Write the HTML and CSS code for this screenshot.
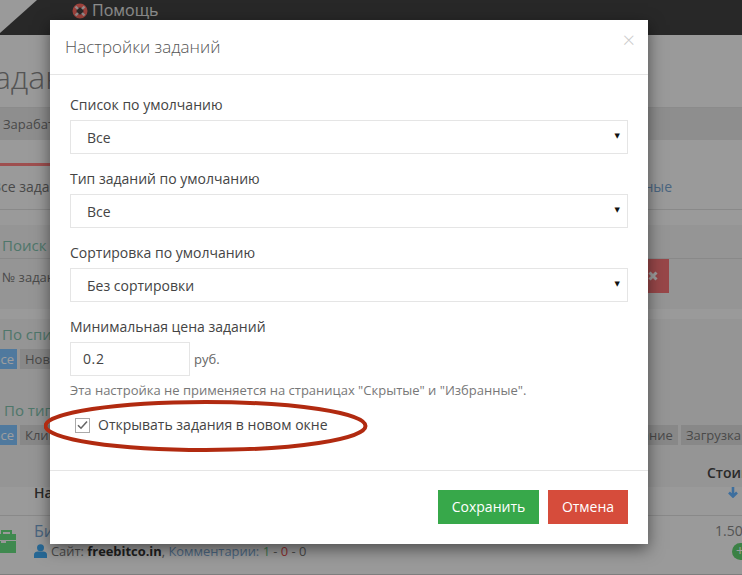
FILE: index.html
```html
<!DOCTYPE html>
<html lang="ru">
<head>
<meta charset="utf-8">
<title>Настройки заданий</title>
<link rel="stylesheet" href="styles.css">
</head>
<body>
<div class="page">
  <header class="topbar">
    <svg class="corner" width="37" height="33" viewBox="0 0 37 33"><path d="M0 0H37L0 33Z" fill="#f9f9f9"/></svg>
    <svg class="help-icon" width="16" height="16" viewBox="0 0 16 16"><circle cx="8" cy="8" r="5.500" fill="none" stroke="#ff6a60" stroke-width="4"/><path d="M3.500 3.500L6 6M12.500 3.500L10 6M3.500 12.500L6 10M12.500 12.500L10 10" stroke="#f0e0e0" stroke-width="2.400"/></svg>
    <span class="help-text">Помощь</span>
  </header>
  <h1 class="page-title">Задания</h1>
  <div class="crumbs">Зарабатывать</div>
  <div class="tabs"><span class="tab-active">Все задания</span><span class="tab-link">Избранные</span></div>
  <section class="search">
    <div class="panel-head">Поиск</div>
    <div class="search-row"><span>№ задания</span><span class="search-x"><svg width="10" height="10" viewBox="0 0 10 10"><path d="M1.500 1.500L8.500 8.500M8.500 1.500L1.500 8.500" stroke="#ffffff" stroke-width="3"/></svg></span></div>
  </section>
  <section class="filter filter-list">
    <div class="panel-head">По списку</div>
    <div class="tags tags-under"><span class="tag tag-on">Все</span><span class="tag">Новые</span></div>
  </section>
  <section class="filter filter-type">
    <div class="panel-head">По типу</div>
    <div class="tags tags-wide">
      <div class="tags"><span class="tag tag-on">Все</span><span class="tag">Клики</span></div>
      <div class="tags"><span class="tag">Скачивание</span><span class="tag tag-last">Загрузка</span></div>
    </div>
  </section>
  <div class="table-head"><span class="th-name">Название</span><span class="th-price">Стоимость<svg class="sort" width="12" height="12" viewBox="0 0 12 12"><path d="M6 1V10M2 6.500L6 10.500L10 6.500" fill="none" stroke="#64b3ff" stroke-width="2.600"/></svg></span></div>
  <div class="task">
    <svg class="case" width="18" height="24" viewBox="0 0 18 24"><path d="M0 4H17V10H0ZM0 11H17V23H0Z" fill="#66dd80"/><path d="M3 4V1H12V4" fill="none" stroke="#66dd80" stroke-width="2"/><rect x="2" y="10" width="5" height="3" fill="#f4f4f4"/></svg>
    <div class="task-main">
      <div class="task-name">Биткоин</div>
      <div class="task-meta"><svg width="13" height="14" viewBox="0 0 13 14"><circle cx="6.500" cy="3.700" r="3.500" fill="#3fa8f0"/><path d="M0 14V10.500C0 8.500 2 7.500 3.500 7.500H9.500C11 7.500 13 8.500 13 10.500V14Z" fill="#3fa8f0"/></svg><span class="meta-text">Сайт: <b>freebitco.in</b>, <span class="blue">Комментарии:</span> <span class="green">1</span> - <span class="red">0</span> - 0</span></div>
    </div>
    <div class="task-price">1.50<span class="plus">+</span></div>
  </div>
</div>
<div class="overlay"></div>
<div class="modal">
  <div class="modal-head"><h2>Настройки заданий</h2><span class="close">×</span></div>
  <form class="modal-body">
    <label class="lbl">Список по умолчанию</label>
    <div class="sel"><span>Все</span><i class="arrow">▼</i></div>
    <label class="lbl">Тип заданий по умолчанию</label>
    <div class="sel"><span>Все</span><i class="arrow">▼</i></div>
    <label class="lbl">Сортировка по умолчанию</label>
    <div class="sel"><span>Без сортировки</span><i class="arrow">▼</i></div>
    <label class="lbl">Минимальная цена заданий</label>
    <div class="price-row"><div class="num">0.2</div><span>руб.</span></div>
    <p class="hint">Эта настройка не применяется на страницах "Скрытые" и "Избранные".</p>
    <div class="check-row"><span class="check"><svg width="11" height="10" viewBox="0 0 11 10"><path d="M1 5.200L4 8.200L10 1.500" fill="none" stroke="#666" stroke-width="1.600"/></svg></span><span>Открывать задания в новом окне</span></div>
  </form>
  <div class="modal-foot"><span class="btn btn-save">Сохранить</span><span class="btn btn-cancel">Отмена</span></div>
</div>
<svg class="ring" width="330" height="60" viewBox="0 0 330 60"><ellipse cx="161.500" cy="28" rx="160" ry="24" fill="none" stroke="#b12a10" stroke-width="4"/></svg>
</body>
</html>
```
FILE: styles.css
```css
* { box-sizing: border-box; }
html, body { margin: 0; height: 575px; overflow: hidden; }
body { font-family: "Open Sans", sans-serif; font-size: 14px; color: #333; background: #f9f9f9; position: relative; width: 742px; }
.page { width: 742px; height: 575px; overflow: hidden; background: #f9f9f9; }
.topbar { height: 35px; background: #424242; display: flex; align-items: flex-start; position: relative; padding: 3px 0 0 72px; }
.corner { position: absolute; left: 0; top: 0; }
.help-icon { margin-right: 4px; }
.help-text { font-size: 16px; line-height: 15px; color: #e4e4e4; }
.page-title { margin: 24px 0 0 -24px; height: 48px; font-size: 32px; line-height: 36px; font-weight: 300; color: #888; white-space: nowrap; }
.crumbs { height: 33px; background: #e6e6e6; border-top: 1px solid #e0e0e0; font-size: 13px; line-height: 33px; padding-left: 3px; color: #777; }
.tabs { margin-top: 26px; border-bottom: 1px solid #ddd; display: flex; justify-content: space-between; height: 44px; font-size: 14px; line-height: 42px; }
.tab-active { color: #777; border-top: 3px solid #ff8080; margin-top: -3px; width: 100px; text-indent: -8px; overflow: hidden; white-space: nowrap; }
.tab-link { color: #78a4cf; margin-right: 70px; white-space: nowrap; }
.search { margin-top: 15px; height: 84px; background: #f0f0f0; padding-top: 8px; }
.panel-head { font-size: 15px; line-height: 24px; color: #7fc0ac; padding-left: 2px; white-space: nowrap; }
.search-row { border-top: 1px solid #ddd; margin-top: 1px; height: 37px; display: flex; justify-content: space-between; font-size: 13px; line-height: 36px; padding-left: 2px; color: #777; }
.search-x { width: 21px; height: 34px; margin-right: 73px; background: #f57377; display: flex; align-items: center; justify-content: flex-start; }
.filter { background: #f0f0f0; }
.filter-list { margin-top: 10px; height: 80px; padding-top: 3px; }
.filter-type { margin-top: -1px; height: 89px; padding-top: 0; }
.filter-type .panel-head { padding-left: 4px; }
.tags { display: flex; gap: 3px; }
.tags-under { margin-top: 3px; }
.tags-wide { justify-content: space-between; margin-top: 3px; }
.tag { height: 20px; background: #dcdcdc; font-size: 13px; line-height: 20px; padding: 0 5px; color: #777; white-space: nowrap; }
.tag-on { background: #80c4ff; color: #fff; text-indent: -8px; width: 17px; overflow: hidden; padding: 0; }
.tag-last { margin-right: -4px; }
.table-head { height: 41px; border-bottom: 1px solid #ddd; margin-top: -12px; display: flex; justify-content: space-between; font-weight: 600; font-size: 14px; position: relative; }
.th-name { margin-left: 34px; color: #444; line-height: 38px; margin-top: -1px; }
.th-price { width: 35px; white-space: nowrap; line-height: 20px; color: #444; display: flex; flex-direction: column; margin-top: -12px; }
.sort { margin: 3px 0 0 20px; }
.task { height: 59px; border-bottom: 1px solid #ccc; display: flex; position: relative; padding-top: 14px; }
.case { flex: none; margin-left: -1px; }
.task-main { margin-left: 17px; width: 500px; margin-top: -9px; }
.task-name { font-size: 16px; line-height: 21px; color: #78a4cf; }
.task-meta { display: flex; align-items: center; gap: 4px; font-size: 12.900px; line-height: 18px; }
.meta-text { color: #777; white-space: nowrap; }
.meta-text b { color: #333; }
.blue { color: #78a4cf; }
.green { color: #66c080; }
.red { color: #e05050; }
.task-price { position: absolute; left: 715px; top: 5px; font-size: 14px; color: #888; line-height: 20px; }
.plus { position: absolute; left: 17px; top: 22px; width: 17px; height: 17px; border-radius: 50%; background: #60d070; color: #fff; line-height: 16px; padding-left: 4px; }
.overlay { position: absolute; inset: 0; background: rgba(0, 0, 0, .38); }
.modal { position: absolute; left: 50px; top: 20px; width: 598px; height: 524px; background: #fff; box-shadow: 0 5px 15px rgba(0, 0, 0, .5); display: flex; flex-direction: column; }
.modal-head { height: 55px; border-bottom: 1px solid #e5e5e5; display: flex; justify-content: space-between; padding: 0 13px 0 15px; flex: none; }
.modal-head h2 { margin: 0; font-size: 17px; font-weight: 300; line-height: 54px; color: #555; }
.close { font-size: 22px; line-height: 38px; color: #ccc; font-weight: 300; }
.modal-body { flex: 1; padding: 20px 20px 0; display: flex; flex-direction: column; }
.lbl { display: block; height: 20px; font-size: 14px; line-height: 20px; margin-bottom: 5px; color: #444; flex: none; }
.sel { height: 34px; border: 1px solid #e5e5e5; display: flex; justify-content: space-between; padding: 0 7px 0 16px; font-size: 14px; line-height: 33px; color: #444; flex: none; margin-bottom: 15px; }
.arrow { font-style: normal; font-size: 7px; color: #111; line-height: 30px; font-family: "DejaVu Sans", sans-serif; }
.price-row { display: flex; align-items: center; gap: 4px; font-size: 13px; color: #666; flex: none; }
.num { width: 120px; height: 34px; border: 1px solid #e5e5e5; padding-left: 12px; font-size: 14px; line-height: 32px; color: #444; letter-spacing: .6px; }
.hint { margin: 5px 0 0; font-size: 13px; line-height: 18px; color: #777; white-space: nowrap; }
.check-row { display: flex; align-items: center; gap: 8px; margin-top: 16px; padding-left: 5px; font-size: 14px; line-height: 20px; color: #444; }
.check { width: 15px; height: 15px; border: 1px solid #aaa; background: #fff; display: flex; align-items: center; justify-content: center; }
.modal-foot { height: 74px; border-top: 1px solid #e5e5e5; display: flex; justify-content: flex-end; gap: 9px; padding: 19px 20px 0; flex: none; }
.btn { height: 34px; font-size: 14px; line-height: 33px; color: #fff; text-align: center; }
.btn-save { width: 101px; background: #37a84a; }
.btn-cancel { width: 80px; background: #d64c3b; }
.ring { position: absolute; left: 44px; top: 398px; }
```
